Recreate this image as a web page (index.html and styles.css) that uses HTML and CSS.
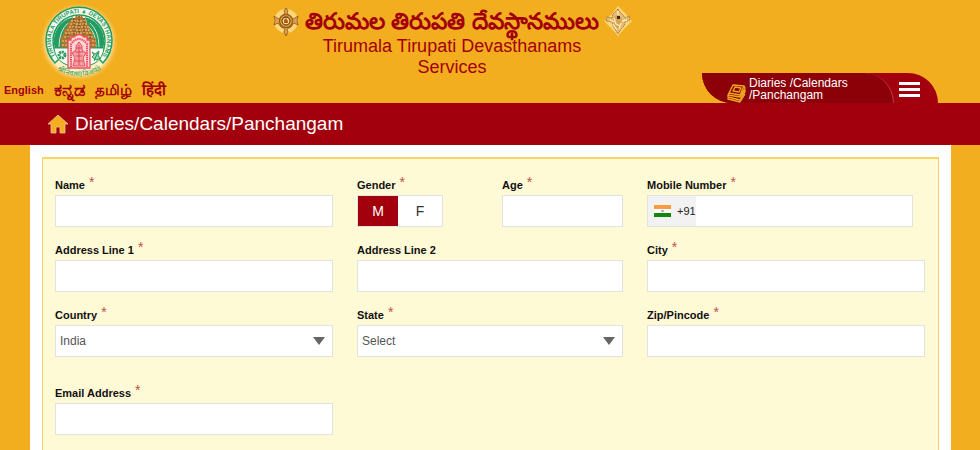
FILE: index.html
```html
<!DOCTYPE html>
<html lang="en">
<head>
<meta charset="utf-8">
<meta name="viewport" content="width=device-width, initial-scale=1">
<title>Diaries/Calendars/Panchangam</title>
<link rel="stylesheet" href="styles.css">
</head>
<body>
<header class="header">
  <div class="brand">
    <svg class="logo" viewBox="0 0 80 80" role="img" aria-label="Tirumala Tirupati Devasthanams">
      <defs>
        <radialGradient id="glow"><stop offset=".8" stop-color="#fff0c0"/><stop offset="1" stop-color="#f2ae1e" stop-opacity="0"/></radialGradient>
        <path id="ring" d="M18.600 57A28 28 0 1 1 61.400 57"/>
        <path id="motto" d="M10 62Q40 87 70 62"/>
      </defs>
      <circle cx="40" cy="40" r="40" fill="url(#glow)"/>
      <path d="M16 61A33 33 0 1 1 64 61L60 57H20z" fill="#f6f9ea" stroke="#239c62" stroke-width="1.500"/>
      <circle cx="40" cy="39" r="26" fill="#fffef6" stroke="#239c62" stroke-width="1.500"/>
      <path d="M16 47A25 25 0 0 1 34 15L25 47zM64 47A25 25 0 0 0 46 15L55 47z" fill="#239c62"/>
      <path d="M20 45q0-16 9-24M23 45q0-14 7-20M60 45q0-16-9-24M57 45q0-14-7-20" fill="none" stroke="#f6f9ea" stroke-width=".8"/>
      <text class="ring-text" text-anchor="middle"><textPath href="#ring" startOffset="50%">TIRUMALA TIRUPATI ▲ DEVASTHANAMS</textPath></text>
      <path d="M34 16h2l1-3 2 2 1-3 1 3 2-2 1 3h2l2 6 2 1 1 6 3 1v5l3 2v10H22V34l3-2v-5l3-1 1-6 2-1z" fill="#ae7430"/>
      <path d="M32 19h16M31 22h18M30 25h20M28 28h24M26 31h28M25 35h30M23 39h34M23 43h34" stroke="#f1cf83" stroke-width="1" stroke-dasharray="2 1"/>
      <path d="M35 16v20M40 14v20M45 16v20M29 32v13M51 32v13" stroke="#643619" stroke-width="1" stroke-dasharray="1.500 1.500"/>
      <path d="M15 46h50Q64 56 56 61 48 66 40 66 32 66 24 61 16 56 15 46z" fill="#fffef6" stroke="#239c62"/>
      <path d="M29 66V38h3v-3h3q5-5 10 0h3v3h3v28z" fill="#ffd4d2" stroke="#ee4f62" stroke-width="1.300"/>
      <path d="M32 65V42q8-10 16 0v23" fill="none" stroke="#ee4f62" stroke-width="2" stroke-dasharray="1.500 .7"/>
      <path d="M40 40l3 4v4l4 3-3 5 2 8H34l2-8-3-5 4-3v-4z" fill="#f2a0a0" stroke="#dd3850" stroke-width=".8"/>
      <path d="M37 46h6M36 50h8M37 54h6M36 59h8M40 43v20" stroke="#dd3850" stroke-width=".8"/>
      <circle cx="23" cy="53" r="3" fill="none" stroke="#239c62" stroke-width="3" stroke-dasharray="2 .7"/>
      <path d="M53 50l3 2 4-3-1 5 3 2-5 2-4-3 2-2zM55 59l4-9" fill="#a0d3ad" stroke="#239c62"/>
      <text class="motto-text" text-anchor="middle"><textPath href="#motto" startOffset="50%">श्रीनिवासो विजयते</textPath></text>
    </svg>
    <nav class="languages" aria-label="Language">
      <a href="#en">English</a><a class="kannada" href="#kn" lang="kn">ಕನ್ನಡ</a><a class="indic" href="#ta" lang="ta">தமிழ்</a><a class="indic" href="#hi" lang="hi">हिंदी</a>
    </nav>
  </div>
  <div class="title">
    <div class="title-row">
      <svg class="emblem" viewBox="0 0 28 30" aria-hidden="true">
        <circle class="halo" cx="14" cy="15" r="12"/>
        <path d="M14 2l2 3-1 2 3 3 3 3 2-1 3-2-1 5 1 4-4-2-3 4-4 2 1 3-2 4-2-4 1-3-4-2-3-4-4 2 1-4-1-5 3 2 2 1 3-3 3-3-1-2z" fill="#dca447" stroke="#8d561c" stroke-width=".8"/>
        <circle cx="14" cy="15" r="6.500" fill="#eab552" stroke="#a15b16" stroke-width="1.500"/>
        <circle cx="14" cy="15" r="4" fill="#ffdc83" stroke="#774011" stroke-width="1.300"/>
        <path d="M12 17v-3l2-2 2 3v2z" fill="#a75f1a"/>
      </svg>
      <h1 lang="te">తిరుమల తిరుపతి దేవస్థానములు</h1>
      <svg class="emblem" viewBox="0 0 28 30" aria-hidden="true">
        <path class="halo" d="M14 0l7 7 7 8-8 8-6 7-6-7-8-8 8-7z"/>
        <path d="M14 3l2 3 3 3 2 3 4-2 1 4-5 2-1 4-3 3-3 5-3-5-2-3-1-4-6-1 1-4 5 1 1-4 3-3z" fill="#e7bc73" stroke="#9b672c" stroke-width=".8" stroke-dasharray="2 .7"/>
        <path d="M9 12l4-3 5 3-1 8-3 4-4-4z" fill="#d8a354"/>
        <path d="M6 14l4 2M18 15l5-1M12 18l4 2M10 12l2 6M17 17l-2 6M14 5v4M9 18l4 6" fill="none" stroke="#fff0bf" stroke-width="1.300"/>
        <path d="M13 10h3v3h-3z" fill="#3f2a18"/>
      </svg>
    </div>
    <p>Tirumala Tirupati Devasthanams<br>Services</p>
  </div>
  <nav class="section-tab" aria-label="Sections">
    <a class="tab-link" href="#diaries">
      <svg class="books" viewBox="0 0 20 20" aria-hidden="true" fill="none" stroke="#eba41e" stroke-width="1.400" stroke-linejoin="round">
        <path d="M6 2l11 1-4 9-11-2zM8 4l6 1-2 4-6-1zM17 3l1 2-5 9M2 10l-1 2 12 2 5-7v2l-5 8-12-3v-2M1 15v1l12 3 5-8"/>
      </svg>
      <span>Diaries /Calendars<br>/Panchangam</span>
    </a>
    <button class="menu" type="button" aria-label="Menu"><span></span><span></span><span></span></button>
  </nav>
</header>
<div class="band">
  <svg class="home" viewBox="0 0 22 20" aria-hidden="true"><path d="M11 1l10 9h-3v9h-5v-6H9v6H4v-9H1z" fill="#f2ae1e" stroke="#f3c49a" stroke-width=".8"/></svg>
  <h2>Diaries/Calendars/Panchangam</h2>
</div>
<main class="page">
  <form class="panel">
    <div class="field"><label for="name">Name <sup>*</sup></label><input id="name" type="text"></div>
    <div class="pair">
      <fieldset class="field gender">
        <legend>Gender <sup>*</sup></legend>
        <div class="toggle">
          <label><input type="radio" name="gender" checked><span>M</span></label>
          <label><input type="radio" name="gender"><span>F</span></label>
        </div>
      </fieldset>
      <div class="field"><label for="age">Age <sup>*</sup></label><input id="age" type="text"></div>
    </div>
    <div class="field mobile">
      <label for="mobile">Mobile Number <sup>*</sup></label>
      <div class="phone">
        <span class="code"><svg viewBox="0 0 17 12" aria-hidden="true"><path fill="#ff9b39" d="M0 0h17v4H0z"/><path fill="#fff" d="M0 4h17v4H0z"/><path fill="#138808" d="M0 8h17v4H0z"/><circle cx="8.500" cy="6" r="1.300" fill="#9e9ed8"/></svg>+91</span>
        <input id="mobile" type="tel">
      </div>
    </div>
    <div class="field"><label for="address1">Address Line 1 <sup>*</sup></label><input id="address1" type="text"></div>
    <div class="field"><label for="address2">Address Line 2</label><input id="address2" type="text"></div>
    <div class="field"><label for="city">City <sup>*</sup></label><input id="city" type="text"></div>
    <div class="field"><label for="country">Country <sup>*</sup></label><div class="select"><select id="country"><option>India</option></select></div></div>
    <div class="field"><label for="state">State <sup>*</sup></label><div class="select"><select id="state"><option>Select</option></select></div></div>
    <div class="field"><label for="zip">Zip/Pincode <sup>*</sup></label><input id="zip" type="text"></div>
    <div class="field email"><label for="email">Email Address <sup>*</sup></label><input id="email" type="email"></div>
  </form>
</main>
</body>
</html>
```
FILE: styles.css
```css
* { box-sizing: border-box; }
html { background: #f2ae1e; }
body {
  margin: 0;
  min-height: 100vh;
  display: flex;
  flex-direction: column;
  font-family: "Liberation Sans", Arial, sans-serif;
}
h1, h2, p { margin: 0; font-weight: normal; }
a { text-decoration: none; }

.header {
  display: grid;
  grid-template-columns: 272px 360px 1fr;
  min-height: 103px;
  color: #a2000c;
}
.brand { padding-top: 2px; }
.logo { display: block; width: 80px; height: 80px; margin-left: 39px; overflow: visible; }
.ring-text { font-size: 6px; font-weight: bold; fill: #239c62; }
.motto-text { font-size: 7px; fill: #239c62; }
.languages {
  display: flex;
  align-items: center;
  gap: 10px;
  height: 16px;
  padding-left: 4px;
  font-size: 11px;
  font-weight: bold;
  line-height: 16px;
  white-space: nowrap;
}
.languages a { color: #a2000c; }
.languages .kannada { font-size: 18px; }
.languages .indic { font-size: 15px; }

.title { padding-top: 6px; text-align: center; }
.title-row { display: flex; align-items: center; justify-content: space-between; height: 30px; }
.title h1 { font-size: 23px; line-height: 28px; font-weight: bold; white-space: nowrap; }
.title p { font-size: 18px; line-height: 21px; }
.emblem { width: 28px; height: 30px; flex: none; }
.halo { fill: #ffe8a3; opacity: .7; }

.section-tab {
  align-self: end;
  justify-self: end;
  display: flex;
  margin-right: 42px;
  background: #a2000c;
  border-radius: 0 32px 0 0;
  border-bottom-left-radius: 32px;
  overflow: hidden;
}
.tab-link {
  display: flex;
  align-items: flex-end;
  gap: 2px;
  width: 192px;
  height: 30px;
  padding-left: 25px;
  background: #8c0008;
  border-right: 1px solid #b8434b;
  border-top-right-radius: 32px;
  color: #fff;
  font-size: 12px;
  line-height: 12px;
}
.tab-link span { padding-bottom: 2px; }
.books { width: 20px; height: 20px; }
.menu {
  display: flex;
  flex-direction: column;
  justify-content: center;
  gap: 3px;
  width: 44px;
  padding: 3px 18px 0 5px;
  border: 0;
  background: none;
}
.menu span { height: 3px; background: #fff; }

.band {
  display: flex;
  align-items: center;
  gap: 6px;
  height: 42px;
  padding-left: 47px;
  background: #a2000c;
  color: #fff;
}
.band h2 { font-size: 19px; line-height: 24px; }
.home { width: 22px; height: 20px; }

.page { flex: 1; margin: 0 29px 0 30px; padding: 12px 12px 0; background: #fff; display: flex; }
.panel {
  flex: 1;
  display: grid;
  grid-template-columns: 278fr 266fr 278fr;
  align-content: start;
  gap: 13px 24px;
  padding: 16px 13px 14px 12px;
  border: solid #fdd367;
  border-width: 2px 1px 0;
  background: #fffad6;
}
.field { margin: 0; padding: 0; border: 0; min-width: 0; }
.field > label, legend {
  display: block;
  height: 20px;
  padding: 0;
  font-size: 11px;
  line-height: 20px;
  font-weight: bold;
  color: #111;
}
sup { margin-left: 1px; font-size: 14px; font-weight: normal; line-height: 0; color: #c0504a; vertical-align: 2px; }
.field > input, .phone, .select, .toggle {
  width: 100%;
  height: 32px;
  border: 1px solid #e2e2e2;
  background: #fff;
}
.pair { display: grid; grid-template-columns: 121fr 121fr; gap: 24px; }
.field > .toggle { display: flex; width: 86px; }
.toggle label { position: relative; flex: 1; display: flex; font-size: 14px; color: #333; }
.toggle label:first-child { flex: none; width: 40px; }
.toggle input { position: absolute; inset: 0; margin: 0; opacity: 0; }
.toggle span { flex: 1; display: grid; place-items: center; }
.toggle input:checked + span { background: #a2000c; color: #fff; }
.mobile { margin-right: 12px; }
.phone { display: flex; }
.phone input { flex: 1; min-width: 0; border: 0; background: none; }
.code { display: flex; align-items: center; gap: 6px; width: 48px; padding-left: 6px; background: #f2f2f2; font-size: 11px; color: #222; }
.code svg { width: 17px; height: 12px; flex: none; }
.select { display: flex; align-items: center; padding-right: 7px; }
.select select {
  flex: 1;
  height: 30px;
  padding: 0 4px;
  border: 0;
  appearance: none;
  background: none;
  font: 12px "Liberation Sans", Arial, sans-serif;
  color: #555;
}
.select::after {
  content: "";
  border: solid transparent;
  border-width: 8px 6px 0;
  border-top-color: #666;
}
.email { margin-top: 13px; }
```
